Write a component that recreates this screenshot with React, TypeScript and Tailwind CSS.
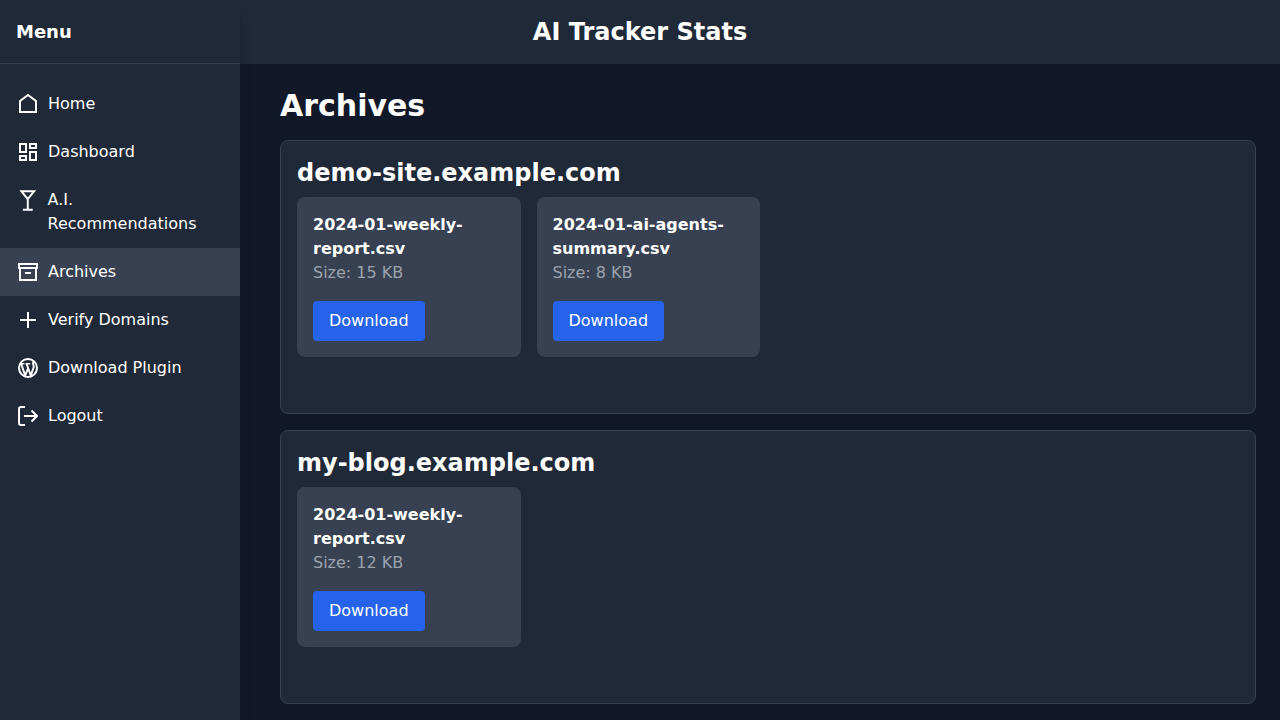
import React from "react";
import { clsx } from "clsx";

type IconProps = { className?: string };

function StrokeIcon({ className, children }: IconProps & { children: React.ReactNode }) {
  return (
    <svg className={className} viewBox="0 0 24 24" fill="none" stroke="currentColor" strokeWidth="2" aria-hidden="true">
      {children}
    </svg>
  );
}

const HomeIcon = ({ className }: IconProps) => (
  <StrokeIcon className={className}>
    <path d="M4 9l8-6 8 6v11H4z" />
  </StrokeIcon>
);

const DashboardIcon = ({ className }: IconProps) => (
  <StrokeIcon className={className}>
    <path d="M4 4h6v8H4zM14 4h6v4h-6zM14 12h6v8h-6zM4 16h6v4H4z" />
  </StrokeIcon>
);

const DrinkIcon = ({ className }: IconProps) => (
  <StrokeIcon className={className}>
    <path d="M12 11L5.5 3h13zM12 11v11M7 22h10" />
  </StrokeIcon>
);

const ArchiveIcon = ({ className }: IconProps) => (
  <StrokeIcon className={className}>
    <path d="M3 4h18v4H3zM4 8v12h16V8M9 13h6" />
  </StrokeIcon>
);

const PlusIcon = ({ className }: IconProps) => (
  <StrokeIcon className={className}>
    <path d="M12 4v16M4 12h16" />
  </StrokeIcon>
);

const WordpressIcon = ({ className }: IconProps) => (
  <StrokeIcon className={className}>
    <circle cx="12" cy="12" r="9" />
    <path d="M5.2 8l4 11.5L12.2 12M10.6 8l4.2 11.5L17.6 11.5c.7-2-.6-2.7-.6-4.3 0-.7.4-1.3 1-1.6" />
    <path d="M4.5 7.7h4M9.6 7.7h4.6" strokeWidth="1.4" />
  </StrokeIcon>
);

const LogoutIcon = ({ className }: IconProps) => (
  <StrokeIcon className={className}>
    <path d="M9 3H5a2 2 0 0 0-2 2v14a2 2 0 0 0 2 2h4M8 12h13M15.5 6.5L21 12l-5.5 5.5" strokeLinejoin="round" />
  </StrokeIcon>
);

const navItems = [
  { label: "Home", icon: HomeIcon },
  { label: "Dashboard", icon: DashboardIcon },
  { label: "A.I. Recommendations", icon: DrinkIcon },
  { label: "Archives", icon: ArchiveIcon, active: true },
  { label: "Verify Domains", icon: PlusIcon },
  { label: "Download Plugin", icon: WordpressIcon },
  { label: "Logout", icon: LogoutIcon },
];

const domains = [
  {
    name: "demo-site.example.com",
    files: [
      { name: "2024-01-weekly-report.csv", size: "15 KB" },
      { name: "2024-01-ai-agents-summary.csv", size: "8 KB" },
    ],
  },
  {
    name: "my-blog.example.com",
    files: [{ name: "2024-01-weekly-report.csv", size: "12 KB" }],
  },
];

function Sidebar() {
  return (
    <aside className="sticky top-0 z-10 h-screen w-60 shrink-0 bg-[#1f2937] shadow-lg">
      <div className="flex h-16 items-center border-b border-[#374151] px-4">
        <h2 className="text-lg font-semibold">Menu</h2>
      </div>
      <nav className="mt-4">
        {navItems.map(({ label, icon: Icon, active }) => (
          <a
            key={label}
            href="#"
            className={clsx("flex items-start px-4 py-3 hover:bg-[#374151]", active && "bg-[#374151]")}
          >
            <Icon className="h-6 w-6" />
            <span className="ml-2">{label}</span>
          </a>
        ))}
      </nav>
    </aside>
  );
}

export default function App() {
  return (
    <div className="flex min-h-screen bg-[#111827] font-['DejaVu_Sans',sans-serif] text-white">
      <Sidebar />
      <div className="min-w-0 flex-1">
        <header className="flex h-16 items-center justify-center bg-[#1f2937] pr-60">
          <h1 className="text-2xl font-bold">AI Tracker Stats</h1>
        </header>
        <main className="pt-6 pr-6 pl-10">
          <h2 className="mb-4 text-3xl font-bold">Archives</h2>
          {domains.map((domain) => (
            <section key={domain.name} className="mb-4 rounded-lg border border-[#374151] bg-[#1f2937] p-4">
              <h3 className="mb-2 text-2xl font-bold">{domain.name}</h3>
              <div className="mb-10 grid grid-cols-4 gap-4">
                {domain.files.map((file) => (
                  <div key={file.name} className="rounded-lg bg-[#374151] p-4">
                    <p className="font-bold">{file.name}</p>
                    <p className="text-[#9ca3af]">Size: {file.size}</p>
                    <button type="button" className="mt-4 rounded-sm bg-[#2563eb] px-4 py-2 hover:bg-[#1d4ed8]">
                      Download
                    </button>
                  </div>
                ))}
              </div>
            </section>
          ))}
        </main>
      </div>
    </div>
  );
}
